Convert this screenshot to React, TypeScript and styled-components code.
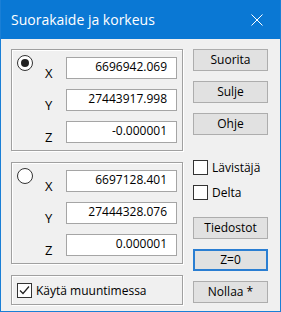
import styled, { createGlobalStyle } from 'styled-components';

const GlobalStyle = createGlobalStyle`
  html, body {
    margin: 0;
    padding: 0;
    background: #f0f0f0;
  }
  body {
    font-family: "Open Sans", "Noto Sans", sans-serif;
    color: #000;
  }
`;

const Window = styled.div`
  width: 281px;
  height: 312px;
  box-sizing: border-box;
  border: 1px solid #1a7fd6;
  border-top: none;
  background: #f0f0f0;
  display: flex;
  flex-direction: column;
`;

const TitleBar = styled.div`
  height: 39px;
  flex-shrink: 0;
  background: #0a78d4;
  color: #fff;
  display: flex;
  align-items: center;
  justify-content: space-between;
  padding: 0 17px 0 10px;
  font-size: 14px;
`;

const Body = styled.div`
  display: grid;
  grid-template-columns: 172px 75px;
  column-gap: 10px;
  padding: 10px 0 0 10px;
  font-size: 12px;
`;

const LeftColumn = styled.div`
  display: flex;
  flex-direction: column;
  gap: 11px;
`;

const RightColumn = styled.div`
  display: flex;
  flex-direction: column;
  align-items: stretch;
`;

const GroupBox = styled.div<{ $height?: number }>`
  box-sizing: border-box;
  border: 1px solid #a0a0a0;
  box-shadow: inset 1px 1px 0 #fff, 1px 1px 0 #fff;
  ${(p) => (p.$height ? `height: ${p.$height}px;` : '')}
`;

const PointGrid = styled(GroupBox)`
  display: grid;
  grid-template-columns: 16px 1fr 111px;
  grid-auto-rows: 22px;
  row-gap: 10px;
  padding: 7px 5px 7px 5px;
`;

const Radio = styled.span<{ $checked?: boolean }>`
  grid-column: 1;
  grid-row: 1;
  width: 16px;
  height: 16px;
  margin-top: -2px;
  box-sizing: border-box;
  border: 1px solid #333;
  border-radius: 50%;
  background: #fff;
  display: flex;
  align-items: center;
  justify-content: center;
  &::after {
    content: '';
    width: 8px;
    height: 8px;
    border-radius: 50%;
    background: ${(p) => (p.$checked ? '#222' : 'transparent')};
  }
`;

const AxisLabel = styled.span`
  grid-column: 2;
  padding-left: 12px;
  font-size: 13px;
  line-height: 15px;
  margin-top: 9px;
`;

const Field = styled.input`
  grid-column: 3;
  box-sizing: border-box;
  width: 111px;
  height: 22px;
  border: 1px solid #a5a5a5;
  background: #fff;
  text-align: right;
  padding: 0 9px 4px 4px;
  font: inherit;
  font-size: 12px;
  color: #000;
  outline: none;
`;

const Button = styled.button<{ $default?: boolean; $mt?: number }>`
  box-sizing: border-box;
  width: 75px;
  height: 22px;
  margin: ${(p) => p.$mt ?? 0}px 0 10px;
  padding: 0 0 2px;
  background: #e1e1e1;
  border: ${(p) => (p.$default ? '2px solid #2a7ed2' : '1px solid #adadad')};
  font: inherit;
  font-size: 12px;
  color: #000;
  &:last-child {
    margin-bottom: 0;
  }
`;

const CheckRow = styled.label<{ $mt?: number }>`
  display: flex;
  align-items: center;
  gap: 4px;
  height: 15px;
  line-height: 15px;
  margin-top: ${(p) => p.$mt ?? 0}px;
`;

const Box = styled.span`
  width: 15px;
  height: 15px;
  box-sizing: border-box;
  border: 1px solid #333;
  background: #fff;
  display: flex;
  align-items: center;
  justify-content: center;
  flex-shrink: 0;
`;

const OptionGroup = styled(GroupBox)`
  display: flex;
  align-items: center;
  padding-left: 5px;
`;

const Check = ({ checked }: { checked?: boolean }) => (
  <Box>
    {checked && (
      <svg width="13" height="13" viewBox="0 0 13 13">
        <polyline points="2,6.5 5,9.5 11,2.5" fill="none" stroke="#222" strokeWidth="1.2" />
      </svg>
    )}
  </Box>
);

type Point = { x: string; y: string; z: string };

const PointBox = ({ checked, p }: { checked?: boolean; p: Point }) => (
  <PointGrid>
    <Radio $checked={checked} />
    <AxisLabel>X</AxisLabel>
    <Field readOnly value={p.x} />
    <AxisLabel>Y</AxisLabel>
    <Field readOnly value={p.y} />
    <AxisLabel>Z</AxisLabel>
    <Field readOnly value={p.z} />
  </PointGrid>
);

export default function App() {
  return (
    <>
      <GlobalStyle />
      <Window>
        <TitleBar>
          <span>Suorakaide ja korkeus</span>
          <svg width="12" height="12" viewBox="0 0 12 12">
            <path d="M0.5 0.5 L11.5 11.5 M11.5 0.5 L0.5 11.5" stroke="#fff" strokeWidth="1" />
          </svg>
        </TitleBar>
        <Body>
          <LeftColumn>
            <PointBox checked p={{ x: '6696942.069', y: '27443917.998', z: '-0.000001' }} />
            <PointBox p={{ x: '6697128.401', y: '27444328.076', z: '0.000001' }} />
            <OptionGroup $height={30}>
              <CheckRow>
                <Check checked />
                <span>Käytä muuntimessa</span>
              </CheckRow>
            </OptionGroup>
          </LeftColumn>
          <RightColumn>
            <Button>Suorita</Button>
            <Button>Sulje</Button>
            <Button>Ohje</Button>
            <CheckRow $mt={15}>
              <Check />
              <span>Lävistäjä</span>
            </CheckRow>
            <CheckRow $mt={10}>
              <Check />
              <span>Delta</span>
            </CheckRow>
            <Button $mt={17}>Tiedostot</Button>
            <Button $default>Z=0</Button>
            <Button>Nollaa *</Button>
          </RightColumn>
        </Body>
      </Window>
    </>
  );
}
